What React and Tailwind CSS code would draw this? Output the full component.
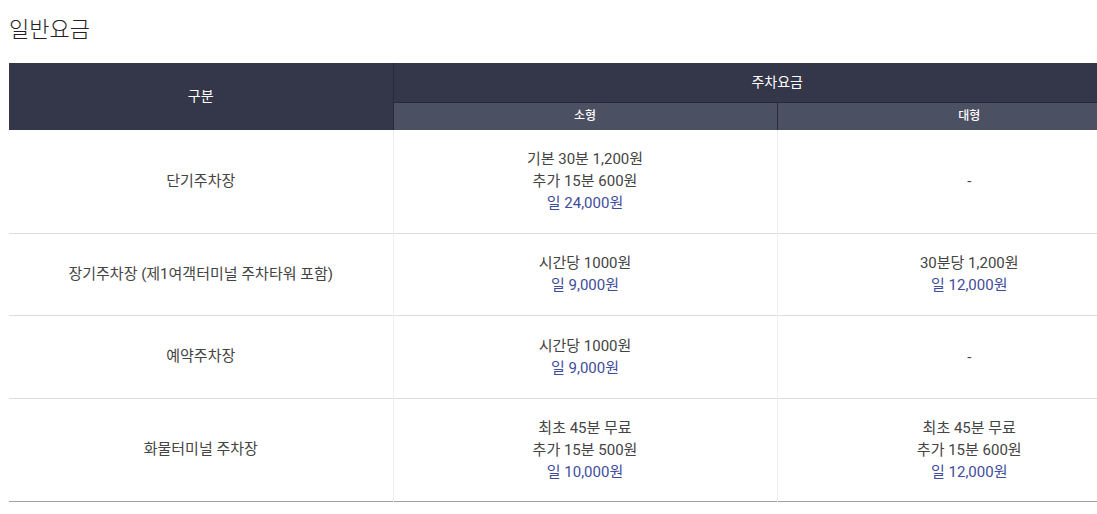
export default function App() {
  const font = { fontFamily: '"Roboto", "Noto Sans CJK KR", sans-serif' };
  const rows = [
    {
      name: "단기주차장",
      small: [["기본 30분 1,200원", false], ["추가 15분 600원", false], ["일 24,000원", true]],
      large: [["-", false]],
      h: "h-[103px]",
    },
    {
      name: "장기주차장 (제1여객터미널 주차타워 포함)",
      small: [["시간당 1000원", false], ["일 9,000원", true]],
      large: [["30분당 1,200원", false], ["일 12,000원", true]],
      h: "h-[82px]",
    },
    {
      name: "예약주차장",
      small: [["시간당 1000원", false], ["일 9,000원", true]],
      large: [["-", false]],
      h: "h-[83px]",
    },
    {
      name: "화물터미널 주차장",
      small: [["최초 45분 무료", false], ["추가 15분 500원", false], ["일 10,000원", true]],
      large: [["최초 45분 무료", false], ["추가 15분 600원", false], ["일 12,000원", true]],
      h: "h-[103px]",
    },
  ];
  const Lines = ({ items }) => (
    <div className="flex flex-col items-center">
      {items.map(([t, blue], i) => (
        <span key={i} className={`leading-[22px] ${blue ? "text-[#3f4c9c]" : "text-[#444]"}`}>
          {t}
        </span>
      ))}
    </div>
  );
  return (
    <div className="bg-white w-[1097px] h-[514px] overflow-hidden" style={font}>
      <h2 className="pl-[9px] pt-[15px] text-[22px] leading-[30px] font-light text-[#222]">일반요금</h2>
      <table className="ml-[9px] mt-[18px] w-[1152px] min-w-[1152px] border-collapse table-fixed text-[15px]">
        <colgroup>
          <col className="w-[384px]" />
          <col className="w-[384px]" />
          <col className="w-[384px]" />
        </colgroup>
        <thead>
          <tr className="h-[39px]">
            <th rowSpan={2} className="bg-[#343649] text-white font-normal text-[14px] border-r border-[#272938]">
              구분
            </th>
            <th colSpan={2} className="bg-[#343649] text-white font-normal text-[14px] border-b border-[#272938]">
              주차요금
            </th>
          </tr>
          <tr className="h-[28px]">
            <th className="bg-[#4c5063] text-white font-medium text-[12px] border-r border-[#272938]">소형</th>
            <th className="bg-[#4c5063] text-white font-medium text-[12px]">대형</th>
          </tr>
        </thead>
        <tbody>
          {rows.map((r, i) => (
            <tr
              key={i}
              className={`${r.h} ${i === rows.length - 1 ? "border-b border-[#a0a0a0]" : "border-b border-[#dedede]"}`}
            >
              <td className="text-center text-[#444] border-r border-[#eeeeee]">{r.name}</td>
              <td className="text-center border-r border-[#eeeeee]">
                <Lines items={r.small} />
              </td>
              <td className="text-center">
                <Lines items={r.large} />
              </td>
            </tr>
          ))}
        </tbody>
      </table>
    </div>
  );
}
